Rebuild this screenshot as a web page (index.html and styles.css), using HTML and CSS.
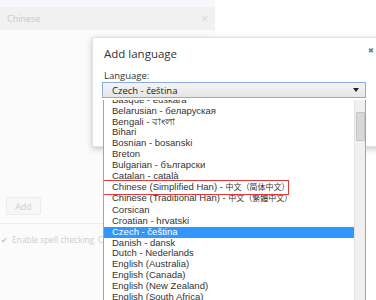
FILE: index.html
```html
<!DOCTYPE html>
<html lang="en">
<head>
    <meta charset="UTF-8">
    <title>Add language</title>
    <link rel="stylesheet" href="styles.css">
</head>
<body>
    <!-- Pagina de ajustes detras del dialogo -->
    <div class="page">
        <div class="panel">
            <div class="panel-top"></div>
            <div class="lang-row">
                <span>Chinese</span>
                <span class="row-close">&#x2715;</span>
            </div>
            <div class="panel-body">
                <button class="add-btn">Add</button>
            </div>
            <div class="spell-row">
                <span class="check">&#x2714;</span>
                <span>Enable spell checking</span>
                <span class="more">C</span>
            </div>
        </div>
        <div class="side"></div>
    </div>

    <!-- Dialogo -->
    <div class="dialog">
        <div class="dialog-head">
            <span class="dialog-title">Add language</span>
            <span class="dialog-close">&#x2716;</span>
        </div>
        <label class="field-label">Language:</label>
        <div class="select">
            <span>Czech - čeština</span>
            <span class="arrow"></span>
        </div>
    </div>

    <!-- Lista desplegada -->
    <div class="dropdown">
        <ul class="options">
            <li>Basque - euskara</li>
            <li>Belarusian - беларуская</li>
            <li>Bengali - বাংলা</li>
            <li>Bihari</li>
            <li>Bosnian - bosanski</li>
            <li>Breton</li>
            <li>Bulgarian - български</li>
            <li>Catalan - català</li>
            <li class="marked">Chinese (Simplified Han) - <span class="cjk">中文（简体中文）</span></li>
            <li>Chinese (Traditional Han) - <span class="cjk">中文（繁體中文）</span></li>
            <li>Corsican</li>
            <li>Croatian - hrvatski</li>
            <li class="selected">Czech - čeština</li>
            <li>Danish - dansk</li>
            <li>Dutch - Nederlands</li>
            <li>English (Australia)</li>
            <li>English (Canada)</li>
            <li>English (New Zealand)</li>
            <li>English (South Africa)</li>
        </ul>
        <div class="scrollbar">
            <div class="thumb"></div>
        </div>
    </div>
</body>
</html>
```

FILE: styles.css
```css
body {
    margin: 0;
    width: 376px;
    height: 300px;
    overflow: hidden;
    position: relative;
    background-color: #ffffff;
    font-family: "Open Sans", "Noto Sans", "Noto Sans CJK SC", sans-serif;
    color: #333;
}
.page {
    display: flex;
    height: 300px;
}
.panel {
    width: 215px;
    background-color: #fbfbfb;
    display: flex;
    flex-direction: column;
}
.panel-top {
    height: 7px;
    background-color: #f6f8fb;
}
.lang-row {
    height: 23px;
    background-color: #f1f1f1;
    display: flex;
    align-items: center;
    justify-content: space-between;
    padding: 0 6px 0 7px;
    font-size: 9px;
    color: #c8c8c8;
}
.row-close {
    font-size: 9px;
    color: #dadada;
}
.panel-body {
    height: 194px;
    border-bottom: 1px solid #ececec;
    display: flex;
    align-items: flex-end;
    padding: 0 6px 8px;
    box-sizing: border-box;
}
.add-btn {
    width: 35px;
    height: 18px;
    border: 1px solid #ececec;
    border-radius: 2px;
    background-color: #f7f7f7;
    font-family: inherit;
    font-size: 9px;
    color: #cfcfcf;
    padding: 0;
}
.spell-row {
    display: flex;
    align-items: center;
    gap: 4px;
    padding: 10px 0 0 1px;
    font-size: 8.3px;
    color: #cdcdcd;
}
.check {
    font-size: 8px;
    color: #c8c8c8;
}
.side {
    flex: 1;
    background-color: #ffffff;
}

/* Dialogo */
.dialog {
    position: absolute;
    left: 92px;
    top: 37px;
    width: 300px;
    height: 110px;
    background-color: #ffffff;
    box-shadow: 0 2px 6px rgba(0, 0, 0, 0.22);
    border: 1px solid #e2e2e2;
    box-sizing: border-box;
    padding: 8px 0 0 11px;
}
.dialog-head {
    display: flex;
    justify-content: space-between;
    width: 270px;
}
.dialog-title {
    font-size: 11.5px;
    color: #333;
}
.dialog-close {
    font-size: 7px;
    color: #777;
}
.field-label {
    display: block;
    margin-top: 9px;
    font-size: 9.5px;
    line-height: 12px;
    color: #333;
}
.select {
    width: 264px;
    height: 16px;
    margin-left: -2px;
    box-sizing: border-box;
    border: 1px solid #8aaee0;
    background: linear-gradient(#f4f4f4, #e6e6e6);
    display: flex;
    align-items: center;
    justify-content: space-between;
    padding: 0 6px 0 9px;
    font-size: 9.5px;
    color: #222;
}
.arrow {
    width: 0;
    height: 0;
    border-left: 3px solid transparent;
    border-right: 3px solid transparent;
    border-top: 4px solid #222;
}

/* Lista desplegada */
.dropdown {
    position: absolute;
    left: 103px;
    top: 100px;
    width: 263px;
    height: 210px;
    background-color: #ffffff;
    border: 1px solid #9aa6b8;
    border-top: none;
    box-sizing: border-box;
    display: flex;
    overflow: hidden;
}
.options {
    list-style: none;
    margin: -5px 0 0 0;
    padding: 0;
    flex: 1;
    font-family: "Liberation Sans", "Noto Sans CJK SC", sans-serif;
    font-size: 9.5px;
    line-height: 10.82px;
    color: #333;
}
.options li {
    padding-left: 8px;
    white-space: nowrap;
}
.options .cjk {
    font-size: 8px;
}
.options li.marked {
    outline: 1.5px solid #e23a3a;
    outline-offset: 1px;
    margin-left: -2px;
    padding-left: 10px;
    width: 175px;
}
.options li.selected {
    background-color: #3297fd;
    color: #ffffff;
}
.scrollbar {
    width: 10px;
    background-color: #f0f0f0;
    border-left: 1px solid #e4e4e4;
}
.thumb {
    margin: 12px 0 0 1px;
    width: 7px;
    height: 27px;
    background-color: #d8d8d8;
    border: 1px solid #c4c4c4;
    border-radius: 1px;
}
```
